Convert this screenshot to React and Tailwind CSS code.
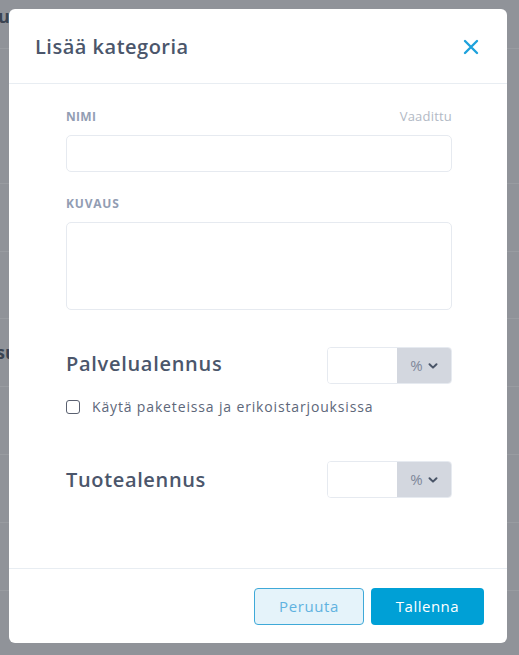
import React from "react";

function Chevron() {
  return (
    <svg width="10" height="10" viewBox="0 0 10 10" className="ml-[5px]">
      <path d="M1.5 3.2 L5 6.6 L8.5 3.2" fill="none" stroke="#4a5568" strokeWidth="2" strokeLinecap="round" strokeLinejoin="round" />
    </svg>
  );
}

function DiscountInput() {
  return (
    <div className="flex h-[37px] w-[125px] rounded-[4px] border border-[#e6eaf0] overflow-hidden">
      <div className="w-[69px] bg-white" />
      <div className="flex-1 bg-[#d3d7df] flex items-center justify-center text-[15px] text-[#7f889a]">
        <span>%</span>
        <Chevron />
      </div>
    </div>
  );
}

export default function App() {
  return (
    <div className="relative w-[519px] h-[655px] overflow-hidden bg-[#909399]" style={{ fontFamily: '"Open Sans", "Noto Sans", sans-serif' }}>
      {/* background page behind overlay */}
      <div className="absolute inset-0 flex flex-col">
        <div className="h-[49px] border-b border-[#999ca1] flex items-start">
          <span className="-ml-[2px] mt-[3px] text-[18px] font-bold text-[#3b4452]">u</span>
        </div>
        <div className="h-[135px] border-b border-[#999ca1]" />
        <div className="h-[68px] border-b border-[#999ca1]" />
        <div className="h-[67px] border-b border-[#999ca1]" />
        <div className="h-[68px] border-b border-[#999ca1] flex items-center">
          <span className="-ml-[4px] text-[18px] font-bold text-[#3b4452]">su</span>
        </div>
        <div className="h-[68px] border-b border-[#999ca1]" />
        <div className="h-[68px] border-b border-[#999ca1]" />
        <div className="h-[68px] border-b border-[#999ca1]" />
      </div>

      <div className="absolute left-[9px] top-[9px] w-[498px] h-[634px] bg-white rounded-[6px] flex flex-col">
        <div className="h-[75px] border-b border-[#e8edf2] flex items-center justify-between pl-[26px] pr-[26px] shrink-0">
          <h1 className="text-[20px] font-semibold text-[#4b566b] mt-[1px] tracking-[0.5px]">Lisää kategoria</h1>
          <svg width="16" height="16" viewBox="0 0 16 16" className="mr-[2px] mt-[2px]">
            <path d="M2 2 L14 14 M14 2 L2 14" stroke="#1ea2dc" strokeWidth="2.4" strokeLinecap="round" />
          </svg>
        </div>

        <div className="flex-1 pl-[57px] pr-[55px] pt-[24px]">
          <div className="flex justify-between items-center h-[18px]">
            <span className="text-[12px] font-bold text-[#929db3] tracking-[0.3px]">NIMI</span>
            <span className="text-[13px] text-[#b2b9c5] tracking-[0.2px]">Vaadittu</span>
          </div>
          <div className="mt-[9px] h-[37px] rounded-[5px] border border-[#e6eaf0]" />

          <div className="mt-[23px] h-[18px] flex items-center">
            <span className="text-[12px] font-bold text-[#929db3] tracking-[0.8px]">KUVAUS</span>
          </div>
          <div className="mt-[9px] h-[88px] rounded-[5px] border border-[#e6eaf0]" />

          <div className="mt-[37px] flex items-center justify-between">
            <span className="text-[20px] font-semibold text-[#4b566b] tracking-[0.7px] -mt-[3px]">Palvelualennus</span>
            <DiscountInput />
          </div>
          <div className="mt-[12px] flex items-center">
            <div className="w-[14px] h-[14px] rounded-[3px] border-[1.5px] border-[#5a6070]" />
            <span className="ml-[12px] text-[14px] text-[#5d677a] tracking-[0.85px]">Käytä paketeissa ja erikoistarjouksissa</span>
          </div>

          <div className="mt-[44px] flex items-center justify-between">
            <span className="text-[20px] font-semibold text-[#4b566b] tracking-[0.65px]">Tuotealennus</span>
            <DiscountInput />
          </div>
        </div>

        <div className="h-[75px] border-t border-[#e8edf2] flex items-start justify-end pr-[23px] pt-[19px] gap-[7px] shrink-0">
          <button className="w-[110px] h-[37px] rounded-[4px] border border-[#3fa9d8] bg-[#e5f3fa] text-[15px] text-[#5fb2e0] tracking-[0.6px]">Peruuta</button>
          <button className="w-[113px] h-[37px] rounded-[4px] bg-[#00a0d6] text-[15px] text-white tracking-[0.5px]">Tallenna</button>
        </div>
      </div>
    </div>
  );
}
